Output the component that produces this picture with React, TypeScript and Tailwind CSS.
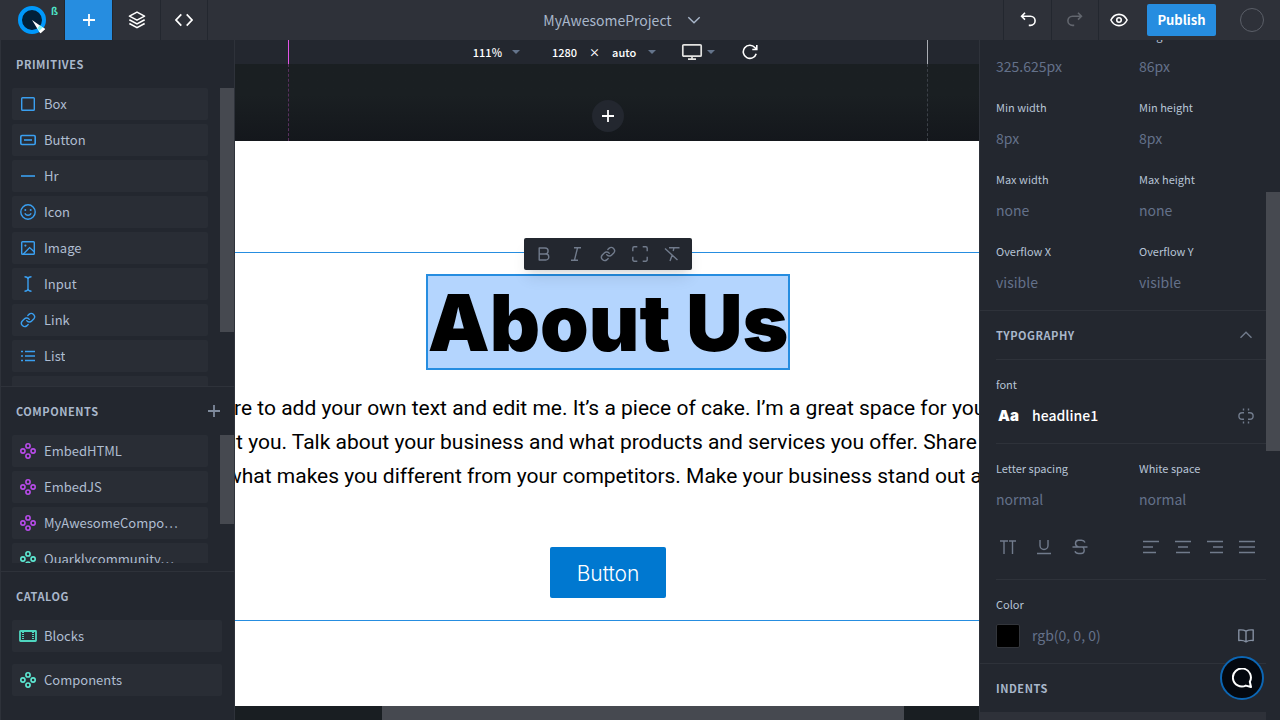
import type { ReactNode } from 'react';

type IconProps = { className?: string };

function Glyph({ children, className = 'size-4', width = 1.4 }: { children: ReactNode; className?: string; width?: number }) {
  return (
    <svg viewBox="0 0 16 16" className={`shrink-0 ${className}`} fill="none" stroke="currentColor" strokeWidth={width} aria-hidden="true">
      {children}
    </svg>
  );
}

const LINK_A = 'M6.7 8.7a3.3 3.3 0 0 0 5 .36l2-2a3.33 3.33 0 0 0-4.7-4.7L7.85 3.5';
const LINK_B = 'M9.3 7.3a3.3 3.3 0 0 0-5-.36l-2 2a3.33 3.33 0 0 0 4.7 4.7l1.15-1.14';

const BoxIcon = () => <Glyph><rect x="1.7" y="1.7" width="12.6" height="12.6" rx="0.8" /></Glyph>;
const ButtonIcon = () => <Glyph width={1.6}><rect x="0.8" y="3.5" width="14.4" height="9" rx="1.2" /><path d="M4 8h8" /></Glyph>;
const HrIcon = () => <Glyph width={1.6}><path d="M1 8h14" /></Glyph>;
const SmileIcon = () => (
  <Glyph>
    <circle cx="8" cy="8" r="7.2" />
    <path d="M4.8 9.3c.8 1.3 1.9 2 3.2 2s2.4-.7 3.2-2" />
    <circle cx="5.3" cy="6" r="1" fill="currentColor" stroke="none" />
    <circle cx="10.7" cy="6" r="1" fill="currentColor" stroke="none" />
  </Glyph>
);
const ImageIcon = () => (
  <Glyph>
    <rect x="1.7" y="1.7" width="12.6" height="12.6" rx="0.8" />
    <path d="M3.2 14.2 9.6 7.6l4.6 4.2" />
    <circle cx="5.4" cy="5.6" r="1.1" fill="currentColor" stroke="none" />
  </Glyph>
);
const InputIcon = () => <Glyph><path d="M4.5.8C6.5.8 8 1.6 8 3.2v9.6c0 1.6-1.5 2.4-3.5 2.4M11.5.8C9.5.8 8 1.6 8 3.2M8 12.8c0 1.6 1.5 2.4 3.5 2.4" /></Glyph>;
const LinkIcon = () => <Glyph><path d={LINK_A} strokeLinecap="round" /><path d={LINK_B} strokeLinecap="round" /></Glyph>;
const ListIcon = () => <Glyph><path d="M1 3.5h2M5 3.5h10M1 8h2M5 8h10M1 12.5h2M5 12.5h10" /></Glyph>;
const NodesIcon = () => (
  <Glyph width={1.6}>
    <circle cx="8" cy="2.9" r="2.1" />
    <circle cx="2.9" cy="8" r="2.1" />
    <circle cx="13.1" cy="8" r="2.1" />
    <circle cx="8" cy="13.1" r="2.1" />
  </Glyph>
);
const BlocksIcon = () => (
  <svg viewBox="0 0 18 12" className="-mx-px h-3 w-[18px] shrink-0" fill="none" stroke="currentColor" aria-hidden="true">
    <rect x="1" y="1" width="16" height="10" rx="0.5" strokeWidth="1.8" />
    <path d="M4 2v8M14 2v8" strokeWidth="2" strokeDasharray="1 1" />
  </svg>
);
const PlusIcon = ({ className }: IconProps) => <Glyph className={className} width={1.8}><path d="M8 2v12M2 8h12" /></Glyph>;
const Caret = () => (
  <svg viewBox="0 0 8 4" className="pointer-events-none h-1 w-2 shrink-0 fill-[#64748b]" aria-hidden="true"><path d="M0 0h8L4 4z" /></svg>
);

function Logo() {
  return (
    <svg viewBox="0 0 32 32" className="size-8" aria-hidden="true">
      <circle cx="16" cy="16" r="12" fill="#012039" stroke="#0098fb" strokeWidth="4" />
      <path d="m16 16 13 9-4.8 4.3z" fill="#fff" />
      <path d="m23.5 21.5 3.5 2-3.8 3.5-1.5-3z" fill="#7df5f5" />
      <path d="m26.8 23.5 2.4 1.5-4.6 4.3-1.4-2.3z" fill="#fff" />
    </svg>
  );
}

function SectionTitle({ children, action }: { children: ReactNode; action?: ReactNode }) {
  return (
    <div className="flex h-12 shrink-0 items-center justify-between">
      <h2 className="text-[11px] leading-[15px] font-bold tracking-wider text-[#a9b7cb] uppercase">{children}</h2>
      {action}
    </div>
  );
}

function Item({ icon, label, tone }: { icon: ReactNode; label: string; tone: string }) {
  return (
    <li>
      <button className="flex h-8 w-full items-center gap-2 rounded-xs bg-[#292d35] px-2 text-left text-[#afbdd1]">
        <span className={`flex w-4 justify-center ${tone}`}>{icon}</span>
        <span className="truncate text-[13px] leading-5">{label}</span>
      </button>
    </li>
  );
}

const primitives = [
  { label: 'Box', icon: <BoxIcon /> },
  { label: 'Button', icon: <ButtonIcon /> },
  { label: 'Hr', icon: <HrIcon /> },
  { label: 'Icon', icon: <SmileIcon /> },
  { label: 'Image', icon: <ImageIcon /> },
  { label: 'Input', icon: <InputIcon /> },
  { label: 'Link', icon: <LinkIcon /> },
  { label: 'List', icon: <ListIcon /> },
];

const components = [
  { label: 'EmbedHTML', tone: 'text-[#b84bea]' },
  { label: 'EmbedJS', tone: 'text-[#b84bea]' },
  { label: 'MyAwesomeCompo…', tone: 'text-[#b84bea]' },
  { label: 'Quarklycommunity…', tone: 'text-[#5eead4]' },
];

function LeftPanel() {
  return (
    <aside className="flex w-[235px] shrink-0 flex-col border-x border-[#2e323a] bg-[#23272f]">
      <section className="flex min-h-0 flex-1 flex-col border-b border-[#2e323a]">
        <div className="pl-[15px]"><SectionTitle>Primitives</SectionTitle></div>
        <div className="flex min-h-0 flex-1 justify-between overflow-hidden">
          <ul className="ml-[11px] flex w-[196px] flex-col gap-1">
            {primitives.map((p) => <Item key={p.label} icon={p.icon} label={p.label} tone="text-[#3a9ff0]" />)}
            <li className="h-8 shrink-0 rounded-xs bg-[#292d35]" />
          </ul>
          <div className="h-[244px] w-3.5 bg-[#464950]" />
        </div>
      </section>
      <section className="border-b border-[#2e323a] pb-2">
        <div className="pr-3 pl-[15px]">
          <SectionTitle action={<button aria-label="Add component" className="text-[#7f8b9d]"><PlusIcon /></button>}>Components</SectionTitle>
        </div>
        <div className="flex h-32 justify-between overflow-hidden">
          <ul className="ml-[11px] flex w-[196px] flex-col gap-1">
            {components.map((c) => <Item key={c.label} icon={<NodesIcon />} label={c.label} tone={c.tone} />)}
          </ul>
          <div className="h-[89px] w-3.5 bg-[#464950]" />
        </div>
      </section>
      <section className="pb-6">
        <div className="pl-[15px]"><SectionTitle>Catalog</SectionTitle></div>
        <ul className="mr-3 ml-[11px] flex flex-col gap-3">
          <Item icon={<BlocksIcon />} label="Blocks" tone="text-[#4fd6bf]" />
          <Item icon={<NodesIcon />} label="Components" tone="text-[#5eead4]" />
        </ul>
      </section>
    </aside>
  );
}

function Header() {
  const tab = 'flex w-12 items-center justify-center border-r border-[#23272f]';
  const tool = 'flex items-center justify-center border-l border-[#23272f]';
  return (
    <header className="flex h-10 shrink-0 bg-[#2e3139] text-white">
      <a href="#home" aria-label="Home" className="flex w-[65px] border-r border-[#23272f] pl-4">
        <span className="flex items-center"><Logo /></span>
        <span className="pt-[3px] pl-[3px] text-[10px] leading-4 font-bold text-[#4fe3c8]">ß</span>
      </a>
      <button aria-label="Add" className={`${tab} bg-[#268de0]`}><PlusIcon className="size-4" /></button>
      <button aria-label="Layers" className={tab}>
        <Glyph className="size-[18px]">
          <path d="M8 1 1.3 4.6 8 8.1l6.7-3.5z" strokeLinejoin="round" />
          <path d="M1.2 7.8 8 11.5l6.8-3.7M1.2 11.1 8 14.8l6.8-3.7" />
        </Glyph>
      </button>
      <button aria-label="Code" className="flex w-[47px] items-center justify-center border-r border-[#23272f]">
        <Glyph className="size-[18px]" width={1.5}><path d="M5.6 3 .9 8l4.7 5M10.4 3l4.7 5-4.7 5" /></Glyph>
      </button>
      <div className="flex flex-1 items-center justify-center pl-[34px]">
        <button className="flex items-center gap-3.5 text-[14px] leading-6 text-[#a9b7cb]">
          MyAwesomeProject
          <Glyph><path d="M2.3 5.2 8 10.8l5.7-5.6" /></Glyph>
        </button>
      </div>
      <button aria-label="Undo" className={`${tool} w-12`}>
        <Glyph width={1.6}><path d="M5 .8 1.6 4.2 5 7.6M1.8 4.2h8.7a4.5 4.5 0 0 1 0 9.2H8.8" /></Glyph>
      </button>
      <button aria-label="Redo" className={`${tool} w-[47px] text-[#62666e]`}>
        <Glyph width={1.6}><path d="m11 .8 3.4 3.4L11 7.6M14.2 4.2H5.5a4.5 4.5 0 0 0 0 9.2h1.7" /></Glyph>
      </button>
      <button aria-label="Preview" className={`${tool} w-[41px]`}>
        <Glyph className="size-[18px]">
          <path d="M.8 8C2.4 4.8 5 3 8 3s5.6 1.8 7.2 5c-1.6 3.2-4.2 5-7.2 5S2.4 11.2.8 8z" />
          <circle cx="8" cy="8" r="2" />
        </Glyph>
      </button>
      <button className="my-1 ml-2 w-[69px] rounded-xs bg-[#268de0] text-[13px] font-bold">Publish</button>
      <button aria-label="Account" className="mr-4 ml-6 size-6 self-center rounded-full border border-[#5b5f68]" />
    </header>
  );
}

function CanvasBar() {
  return (
    <div className="flex h-6 shrink-0 items-center justify-center bg-[#23272f] pl-[17px] text-[11px] leading-4 font-medium text-white">
      <button className="flex items-center gap-2.5">111%<Caret /></button>
      <div className="ml-8 flex items-center gap-3">
        <span>1280</span>
        <span>×</span>
        <button className="flex items-center gap-3">auto<Caret /></button>
      </div>
      <button aria-label="Device" className="ml-[25px] flex items-center gap-1">
        <svg viewBox="0 0 22 18" className="h-[18px] w-[22px]" fill="none" stroke="#e2e2e0" strokeWidth="1.7" aria-hidden="true">
          <rect x="1.8" y="1.8" width="18.4" height="11.4" rx="1" />
          <path d="M11 13v3M7 16.2h8" />
        </svg>
        <Caret />
      </button>
      <button aria-label="Reload" className="ml-[27px]">
        <Glyph width={1.6}><path d="M14.2 9.7A6.6 6.6 0 1 1 12.9 3.5l1.6 1.7M14.8 1v4.5h-4.5" /></Glyph>
      </button>
    </div>
  );
}

function TextTools() {
  const btn = 'flex size-8 items-center justify-center';
  return (
    <div className="absolute bottom-full left-1/2 mb-1 flex h-8 -translate-x-1/2 rounded-xs bg-[#23272f] px-1 text-[#717b8c] shadow-lg">
      <button aria-label="Bold" className={btn}>
        <Glyph><path d="M3.2 8h6.6a3 3 0 0 1 0 6H3.2V2h5.9a3 3 0 0 1 0 6" strokeLinejoin="round" /></Glyph>
      </button>
      <button aria-label="Italic" className={btn}><Glyph><path d="M6 1.7h7M3 14.3h7M9.6 1.7 6.4 14.3" /></Glyph></button>
      <button aria-label="Link" className={btn}><LinkIcon /></button>
      <button aria-label="Span" className={btn}>
        <Glyph><path d="M.8 5.3V2.2A1.4 1.4 0 0 1 2.2.8h3.1M10.7.8h3.1a1.4 1.4 0 0 1 1.4 1.4v3.1M15.2 10.7v3.1a1.4 1.4 0 0 1-1.4 1.4h-3.1M5.3 15.2H2.2a1.4 1.4 0 0 1-1.4-1.4v-3.1" /></Glyph>
      </button>
      <button aria-label="Clear formatting" className={btn}>
        <Glyph><path d="M5 1.7h10.5M10 1.7 9.2 5M8 9.5l-2 5.5M1 2.5 13.5 14" /></Glyph>
      </button>
    </div>
  );
}

function Canvas() {
  return (
    <main className="relative flex min-w-0 flex-1 flex-col overflow-hidden">
      <CanvasBar />
      <div className="flex h-[77px] shrink-0 items-end justify-center bg-linear-to-b from-[#1a1f22] from-40% to-[#14171c] pb-[9px]">
        <button aria-label="Add section" className="ml-0.5 flex size-8 items-center justify-center rounded-full bg-[#23272f] text-white">
          <PlusIcon className="size-4" />
        </button>
      </div>
      <div className="pointer-events-none absolute inset-x-[53px] top-0 flex justify-between">
        <div className="w-px"><div className="h-6 w-px bg-[#e254e6]" /><div className="h-[77px] border-l border-dashed border-[#59305f]" /></div>
        <div className="-mr-[2px] w-px"><div className="h-6 w-px bg-[#a9adb3]" /><div className="h-[77px] border-l border-dashed border-[#3c4148]" /></div>
      </div>
      <div className="flex min-h-0 flex-1 flex-col bg-white pt-[111px] text-black">
        <section className="flex h-[369px] flex-col items-center border-y border-[#268de0] pt-[21px]">
          <div className="relative ml-0.5">
            <TextTools />
            <h1 className="border-2 border-[#268de0] bg-[#b4d5fe] pt-0.5 font-[Inter,sans-serif] text-[78px] leading-[90px] font-black whitespace-nowrap">About Us</h1>
          </div>
          <p className="mt-[21px] text-center font-[Roboto,sans-serif] text-[21px] leading-[34px] whitespace-nowrap">
            This is paragraph. Click here to add your own text and edit me. It’s a piece of cake. I’m a great space for you to tell a story and let your<br />
            site visitors know more about you. Talk about your business and what products and services you offer. Share how you came up with ideas<br />
            for your company and what makes you different from your competitors. Make your business stand out and show your visitors it
          </p>
          <button className="mt-[54px] ml-0.5 h-[51px] w-[116px] rounded-xs bg-[#0078d0] pt-0.5 font-[Inter,sans-serif] text-[21px] font-light text-white">Button</button>
        </section>
      </div>
      <div className="h-3.5 shrink-0 bg-[#191e22] px-[147px]">
        <div className="mr-[-72px] h-full bg-[#464950]" />
      </div>
    </main>
  );
}

function Field({ label, value }: { label: string; value: string }) {
  return (
    <label className="flex min-w-0 flex-col gap-[3px] pl-4">
      <span className="h-6 text-[11px] leading-[22px] text-[#b7c4d6]">{label}</span>
      <input className="h-8 w-full bg-transparent pb-0.5 text-[14px] text-[#64718a] outline-none" defaultValue={value} />
    </label>
  );
}

const sizes = [
  ['Width', '325.625px'], ['Height', '86px'],
  ['Min width', '8px'], ['Min height', '8px'],
  ['Max width', 'none'], ['Max height', 'none'],
  ['Overflow X', 'visible'], ['Overflow Y', 'visible'],
];

const aligns = [
  { name: 'Align left', d: 'M0 2.5h16M0 8h10M0 13.5h13' },
  { name: 'Align center', d: 'M0 2.5h16M3 8h10M1 13.5h14' },
  { name: 'Align right', d: 'M0 2.5h16M6 8h10M3 13.5h13' },
  { name: 'Justify', d: 'M0 2.5h16M0 8h16M0 13.5h16' },
];

function RightPanel() {
  const rule = 'ml-4 border-t border-[#2e323a]';
  return (
    <aside className="flex w-[301px] shrink-0 overflow-hidden border-l border-[#2e323a] bg-[#23272f]">
      <div className="-mt-4 flex min-w-0 flex-1 flex-col">
        <div className="grid grid-cols-2 gap-y-[13px] pb-[11px]">
          {sizes.map(([label, value]) => <Field key={label} label={label} value={value} />)}
        </div>
        <section className="border-t border-[#2e323a]">
          <div className="pr-3 pl-4">
            <SectionTitle action={<button aria-label="Collapse" className="text-[#717b8c]"><Glyph><path d="M2.5 10.8 8 5.3l5.5 5.5" /></Glyph></button>}>Typography</SectionTitle>
          </div>
          <div className={`${rule} flex flex-col gap-[3px] pt-[13px] pr-3 pb-[11px]`}>
            <label htmlFor="font" className="h-6 text-[11px] leading-[22px] text-[#b7c4d6]">font</label>
            <div className="flex h-8 items-center text-white">
              <span className="w-9 pl-0.5 font-[Inter,sans-serif] text-[15px] font-black">Aa</span>
              <input id="font" className="min-w-0 flex-1 bg-transparent pb-0.5 text-[14px] font-medium outline-none" defaultValue="headline1" />
              <button aria-label="Unlink" className="text-[#717b8c]">
                <Glyph><path d="M6 4.7H4.2a3.3 3.3 0 0 0 0 6.6H6M10 4.7h1.8a3.3 3.3 0 0 1 0 6.6H10M5.5.5v2M10.500.5v2M5.500 13.500v2M10.500 13.500v2" /></Glyph>
              </button>
            </div>
          </div>
          <div className={`${rule} pt-[13px] pb-4`}>
            <div className="-ml-4 grid grid-cols-2">
              <Field label="Letter spacing" value="normal" />
              <Field label="White space" value="normal" />
            </div>
            <div className="mt-[15px] flex h-8 items-center justify-between pr-[11px] pl-1 text-[#717b8c]">
              <div className="flex gap-5">
                <button aria-label="Uppercase"><Glyph><path d="M0 2h8M4 2v13M9 2h8M12.5 2v13" /></Glyph></button>
                <button aria-label="Underline"><Glyph><path d="M4 1v5.5a4 4 0 0 0 8 0V1M1 14.5h14" /></Glyph></button>
                <button aria-label="Strikethrough"><Glyph><path d="M13 3.5c-.6-1.5-2-2.3-3.500-2.300h-3a3.200 3.200 0 0 0-3 3.200C3.500 6.500 5 7.500 6.500 8M.5 8h15M3 12.200c.5 1.500 1.800 2.300 3.500 2.300H9a3.200 3.200 0 0 0 3.200-3.200c0-1.500-.7-2.700-1.700-3.300" /></Glyph></button>
              </div>
              <div className="flex gap-4">
                {aligns.map((a) => <button key={a.name} aria-label={a.name}><Glyph><path d={a.d} /></Glyph></button>)}
              </div>
            </div>
          </div>
          <div className={`${rule} flex flex-col gap-[3px] pt-[13px] pr-3 pb-[11px]`}>
            <label htmlFor="color" className="h-6 text-[11px] leading-[22px] text-[#b7c4d6]">Color</label>
            <div className="flex h-8 items-center">
              <span className="mr-3 size-6 rounded-xs border border-[#33363c] bg-black" />
              <input id="color" className="min-w-0 flex-1 bg-transparent pb-0.5 text-[14px] text-[#64718a] outline-none" defaultValue="rgb(0, 0, 0)" />
              <button aria-label="Color library" className="text-[#8590a2]">
                <Glyph><path d="M.8 2c2.700-.4 5.200 0 7.200 1.200 2-1.200 4.500-1.600 7.200-1.200v10.500c-2.700-.4-5.200 0-7.200 1.300-2-1.300-4.500-1.700-7.200-1.300zM8 3.200v10.400" strokeLinejoin="round" /></Glyph>
              </button>
            </div>
          </div>
        </section>
        <section className="flex flex-1 flex-col border-t border-[#2e323a]">
          <div className="pl-4"><SectionTitle>Indents</SectionTitle></div>
          <div className="h-2 bg-[#2e3139]" />
        </section>
      </div>
      <div className="mt-[152px] h-[259px] w-3.5 shrink-0 bg-[#464950]" />
    </aside>
  );
}

export default function App() {
  return (
    <div className="flex h-screen flex-col overflow-hidden bg-[#23272f] font-['Noto_Sans_CJK_SC',sans-serif]">
      <Header />
      <div className="flex min-h-0 flex-1">
        <LeftPanel />
        <Canvas />
        <RightPanel />
      </div>
      <button aria-label="Open chat" className="fixed right-4 bottom-5 flex size-11 items-center justify-center rounded-full border-2 border-[#0c66b4] bg-[#04080f] text-white">
        <svg viewBox="0 0 20 20" className="size-5" fill="none" stroke="currentColor" strokeWidth="2" strokeLinejoin="round" aria-hidden="true">
          <path d="M19 19 17.8 13.8A9 9 0 1 0 13.8 17.6z" />
        </svg>
      </button>
    </div>
  );
}
